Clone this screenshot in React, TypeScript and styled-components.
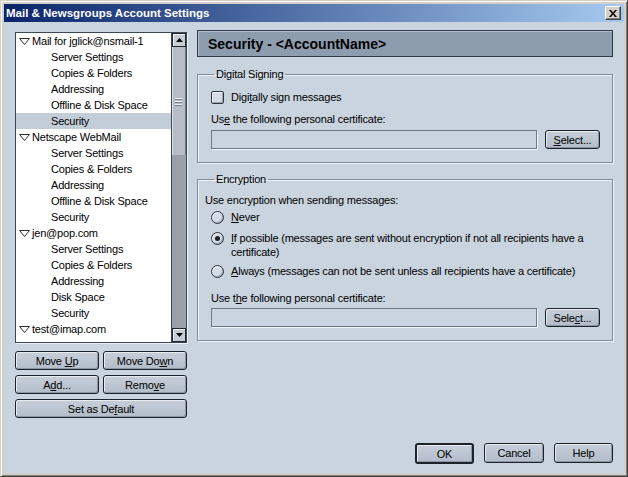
import React from 'react';
import styled, { createGlobalStyle } from 'styled-components';

const GlobalStyle = createGlobalStyle`
  html, body {
    margin: 0;
    padding: 0;
    background: #d4d0c8;
  }
  body {
    font-family: "Liberation Sans", Arial, sans-serif;
    font-size: 11px;
    letter-spacing: -0.2px;
    color: #000;
  }
  * {
    box-sizing: border-box;
  }
`;

const Window = styled.div`
  width: 628px;
  height: 477px;
  display: flex;
  flex-direction: column;
  background: #d4d0c8;
  border: 1px solid;
  border-color: #d4d0c8 #404040 #404040 #d4d0c8;
  box-shadow: inset 1px 1px 0 #fff, inset -1px -1px 0 #808080;
  padding: 3px;
`;

const TitleBar = styled.div`
  height: 18px;
  display: flex;
  align-items: center;
  justify-content: space-between;
  padding: 0 3px 0 2px;
  background: linear-gradient(to right, #0a246a, #a6caf0);
`;

const TitleText = styled.span`
  color: #fff;
  font-weight: bold;
  font-size: 11.5px;
  letter-spacing: 0;
`;

const CloseButton = styled.div`
  width: 16px;
  height: 14px;
  display: flex;
  align-items: center;
  justify-content: center;
  background: #d4d0c8;
  border: 1px solid;
  border-color: #fff #404040 #404040 #fff;
  box-shadow: inset -1px -1px 0 #808080;
`;

const Content = styled.div`
  flex: 1;
  display: flex;
  flex-direction: column;
  background: #c9d4df;
  padding: 8px 11px 9px 11px;
`;

const Main = styled.div`
  display: flex;
  gap: 10px;
`;

const LeftColumn = styled.div`
  width: 172px;
  display: flex;
  flex-direction: column;
  padding-top: 2px;
`;

const Tree = styled.div`
  height: 311px;
  display: flex;
  border: 1px solid #3e4853;
  box-shadow: 1px 1px 0 #eef2f6;
  background: #fff;
`;

const TreeList = styled.div`
  flex: 1;
  overflow: hidden;
`;

const Row = styled.div<{ $level: number; $selected?: boolean }>`
  height: 16px;
  display: flex;
  align-items: center;
  gap: 2px;
  padding-left: ${(p) => (p.$level === 0 ? 3 : 35)}px;
  background: ${(p) => (p.$selected ? '#c3cdd8' : 'transparent')};
  white-space: nowrap;
`;

const Scrollbar = styled.div`
  width: 15px;
  display: flex;
  flex-direction: column;
  background: #9a9fa8;
  border-left: 1px solid #3e4853;
`;

const ArrowButton = styled.div`
  height: 14px;
  display: flex;
  align-items: center;
  justify-content: center;
  background: #c4ccd6;
  border: 1px solid #20262e;
  box-shadow: inset 1px 1px 0 #eef2f6;
`;

const Thumb = styled.div`
  height: 108px;
  display: flex;
  flex-direction: column;
  align-items: center;
  justify-content: center;
  gap: 2px;
  background: #b7bdc6;
  border-right: 1px solid #6a717c;
  box-shadow: inset 1px 0 0 #dce1e7;
`;

const Grip = styled.div`
  width: 7px;
  height: 1px;
  background: #eef1f4;
  box-shadow: 0 1px 0 #7a818b;
`;

const Track = styled.div`
  flex: 1;
`;

const ButtonGrid = styled.div`
  margin-top: 8px;
  display: grid;
  grid-template-columns: 84px 84px;
  gap: 5px 4px;
`;

const Button = styled.div<{ $wide?: boolean; $default?: boolean; $width?: number; $height?: number }>`
  grid-column: ${(p) => (p.$wide ? '1 / span 2' : 'auto')};
  width: ${(p) => (p.$width ? `${p.$width}px` : 'auto')};
  height: ${(p) => p.$height ?? 19}px;
  display: flex;
  align-items: center;
  justify-content: center;
  background: linear-gradient(#c6cfd9, #b3bdc9);
  border: ${(p) => (p.$default ? 2 : 1)}px solid #1c232b;
  border-radius: 3px;
  box-shadow: inset 1px 1px 0 #e6ebf0, inset -1px -1px 0 #8c97a3;
  white-space: nowrap;
`;

const U = styled.u`
  text-decoration: underline;
  text-underline-offset: 1px;
`;

const RightColumn = styled.div`
  flex: 1;
  display: flex;
  flex-direction: column;
`;

const Header = styled.div`
  height: 27px;
  display: flex;
  align-items: center;
  padding-left: 10px;
  background: #8d9dae;
  border: 1px solid #2f3b48;
  box-shadow: inset 1px 1px 0 #b3bfcc;
  font-weight: bold;
  font-size: 14px;
  letter-spacing: 0;
`;

const Group = styled.fieldset<{ $top: number; $bottom: number }>`
  margin: ${(p) => p.$top}px 0 0 0;
  padding: 0 12px ${(p) => p.$bottom}px 13px;
  min-width: 0;
  border: 1px solid #7f8b99;
  box-shadow: inset 1px 1px 0 #eef2f6, 1px 1px 0 #eef2f6;
  display: flex;
  flex-direction: column;
`;

const Legend = styled.legend`
  padding: 0 2px;
  margin-left: 3px;
  line-height: 13px;
`;

const Line = styled.div<{ $top: number; $indent?: number }>`
  margin-top: ${(p) => p.$top}px;
  margin-left: ${(p) => p.$indent ?? 0}px;
  line-height: 14px;
`;

const OptionRow = styled.div<{ $top: number }>`
  margin-top: ${(p) => p.$top}px;
  display: flex;
  align-items: flex-start;
  gap: 7px;
  line-height: 14px;
`;

const OptionLabel = styled.div`
  flex: 1;
`;

const CheckBox = styled.div`
  width: 13px;
  height: 13px;
  margin-top: 1px;
  flex: none;
  border: 1px solid #2c3440;
  border-radius: 2px;
  background: #d3dbe4;
  box-shadow: inset 1px 1px 0 #f2f5f8, inset -1px -1px 0 #9aa5b1;
`;

const Radio = styled.div<{ $checked?: boolean }>`
  width: 13px;
  height: 13px;
  margin-top: 1px;
  flex: none;
  display: flex;
  align-items: center;
  justify-content: center;
  border: 1px solid #2c3440;
  border-radius: 50%;
  background: #d3dbe4;
  box-shadow: inset 1px 1px 0 #f2f5f8, inset -1px -1px 0 #9aa5b1;
  &::after {
    content: '';
    width: 5px;
    height: 5px;
    border-radius: 50%;
    background: ${(p) => (p.$checked ? '#1a1f26' : 'transparent')};
  }
`;

const FieldRow = styled.div<{ $top: number }>`
  margin-top: ${(p) => p.$top}px;
  display: flex;
  gap: 8px;
`;

const TextField = styled.div`
  flex: 1;
  height: 19px;
  background: #cad4de;
  border: 1px solid #6b7785;
  box-shadow: 1px 1px 0 #f4f7fa;
`;

const Spacer = styled.div`
  flex: 1;
`;

const Footer = styled.div`
  display: flex;
  justify-content: flex-end;
  gap: 10px;
`;

type TreeItem = { label: string; level: number; selected?: boolean };

const accountRows = (name: string, disk: string, selected = false): TreeItem[] => [
  { label: name, level: 0 },
  { label: 'Server Settings', level: 1 },
  { label: 'Copies & Folders', level: 1 },
  { label: 'Addressing', level: 1 },
  { label: disk, level: 1 },
  { label: 'Security', level: 1, selected },
];

const treeItems: TreeItem[] = [
  ...accountRows('Mail for jglick@nsmail-1', 'Offline & Disk Space', true),
  ...accountRows('Netscape WebMail', 'Offline & Disk Space'),
  ...accountRows('jen@pop.com', 'Disk Space'),
  { label: 'test@imap.com', level: 0 },
];

const Twisty = () => (
  <svg width="11" height="7" viewBox="0 0 11 7">
    <polygon points="0.5,0.5 10.5,0.5 5.5,6.5" fill="#fff" stroke="#2a2f36" strokeWidth="1" />
  </svg>
);

const Arrow = ({ up }: { up?: boolean }) => (
  <svg width="7" height="4" viewBox="0 0 7 4">
    <polygon points={up ? '0,4 7,4 3.5,0' : '0,0 7,0 3.5,4'} fill="#000" />
  </svg>
);

const App: React.FC = () => (
  <>
    <GlobalStyle />
    <Window>
      <TitleBar>
        <TitleText>Mail &amp; Newsgroups Account Settings</TitleText>
        <CloseButton>
          <svg width="8" height="7" viewBox="0 0 8 7">
            <path d="M0 0 L2 0 L4 2.5 L6 0 L8 0 L5 3.5 L8 7 L6 7 L4 4.5 L2 7 L0 7 L3 3.5 Z" fill="#000" />
          </svg>
        </CloseButton>
      </TitleBar>
      <Content>
        <Main>
          <LeftColumn>
            <Tree>
              <TreeList>
                {treeItems.map((item, i) => (
                  <Row key={i} $level={item.level} $selected={item.selected}>
                    {item.level === 0 && <Twisty />}
                    {item.label}
                  </Row>
                ))}
              </TreeList>
              <Scrollbar>
                <ArrowButton>
                  <Arrow up />
                </ArrowButton>
                <Thumb>
                  <Grip />
                  <Grip />
                  <Grip />
                </Thumb>
                <Track />
                <ArrowButton>
                  <Arrow />
                </ArrowButton>
              </Scrollbar>
            </Tree>
            <ButtonGrid>
              <Button>
                Move&nbsp;<U>U</U>p
              </Button>
              <Button>
                Move Do<U>w</U>n
              </Button>
              <Button>
                A<U>d</U>d...
              </Button>
              <Button>
                Remo<U>v</U>e
              </Button>
              <Button $wide>
                Set as De<U>f</U>ault
              </Button>
            </ButtonGrid>
          </LeftColumn>
          <RightColumn>
            <Header>Security - &lt;AccountName&gt;</Header>
            <Group $top={11} $bottom={13}>
              <Legend>Digital Signing</Legend>
              <OptionRow $top={9}>
                <CheckBox />
                <OptionLabel>
                  Digi<U>t</U>ally sign messages
                </OptionLabel>
              </OptionRow>
              <Line $top={8}>
                Us<U>e</U> the following personal certificate:
              </Line>
              <FieldRow $top={4}>
                <TextField />
                <Button $width={55}>
                  <U>S</U>elect...
                </Button>
              </FieldRow>
            </Group>
            <Group $top={10} $bottom={13}>
              <Legend>Encryption</Legend>
              <Line $top={7} $indent={-6}>
                Use encryption when sending messages:
              </Line>
              <OptionRow $top={3}>
                <Radio />
                <OptionLabel>
                  <U>N</U>ever
                </OptionLabel>
              </OptionRow>
              <OptionRow $top={7}>
                <Radio $checked />
                <OptionLabel>
                  <U>I</U>f possible (messages are sent without encryption if not all recipients have a certificate)
                </OptionLabel>
              </OptionRow>
              <OptionRow $top={5}>
                <Radio />
                <OptionLabel>
                  <U>A</U>lways (messages can not be sent unless all recipients have a certificate)
                </OptionLabel>
              </OptionRow>
              <Line $top={13}>
                Use t<U>h</U>e following personal certificate:
              </Line>
              <FieldRow $top={3}>
                <TextField />
                <Button $width={55}>
                  Sele<U>c</U>t...
                </Button>
              </FieldRow>
            </Group>
          </RightColumn>
        </Main>
        <Spacer />
        <Footer>
          <Button $default $width={59} $height={21}>
            OK
          </Button>
          <Button $width={60} $height={20}>
            Cancel
          </Button>
          <Button $width={59} $height={20}>
            Help
          </Button>
        </Footer>
      </Content>
    </Window>
  </>
);

export default App;
